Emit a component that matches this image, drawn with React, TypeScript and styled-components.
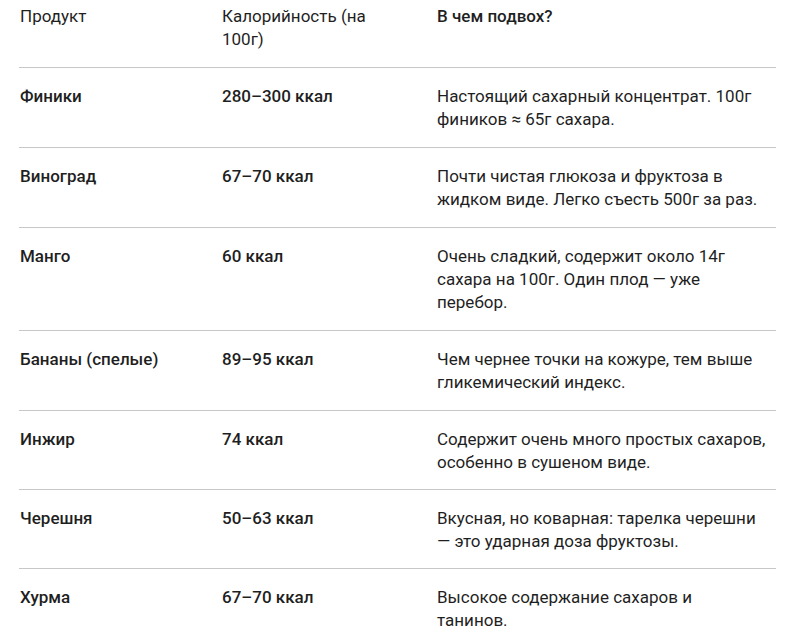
import React from "react";
import styled, { createGlobalStyle } from "styled-components";

interface FruitRow {
  name: string;
  kcal: string;
  catchText: string;
}

const rows: FruitRow[] = [
  {
    name: "Финики",
    kcal: "280–300 ккал",
    catchText: "Настоящий сахарный концентрат. 100г фиников ≈ 65г сахара.",
  },
  {
    name: "Виноград",
    kcal: "67–70 ккал",
    catchText:
      "Почти чистая глюкоза и фруктоза в жидком виде. Легко съесть 500г за раз.",
  },
  {
    name: "Манго",
    kcal: "60 ккал",
    catchText:
      "Очень сладкий, содержит около 14г сахара на 100г. Один плод — уже перебор.",
  },
  {
    name: "Бананы (спелые)",
    kcal: "89–95 ккал",
    catchText: "Чем чернее точки на кожуре, тем выше гликемический индекс.",
  },
  {
    name: "Инжир",
    kcal: "74 ккал",
    catchText: "Содержит очень много простых сахаров, особенно в сушеном виде.",
  },
  {
    name: "Черешня",
    kcal: "50–63 ккал",
    catchText: "Вкусная, но коварная: тарелка черешни — это ударная доза фруктозы.",
  },
  {
    name: "Хурма",
    kcal: "67–70 ккал",
    catchText: "Высокое содержание сахаров и\nтанинов.",
  },
];

const App: React.FC = () => {
  return (
    <>
      <GlobalStyle />
      <Table>
        <HeadRow>
          <Cell>Продукт</Cell>
          <Cell>Калорийность (на 100г)</Cell>
          <Cell $bold>В чем подвох?</Cell>
        </HeadRow>
        {rows.map((row) => (
          <BodyRow key={row.name}>
            <Cell $bold>{row.name}</Cell>
            <Cell $bold>{row.kcal}</Cell>
            <Cell>{row.catchText}</Cell>
          </BodyRow>
        ))}
      </Table>
    </>
  );
};

export default App;

const GlobalStyle = createGlobalStyle`
  body {
    margin: 0;
    background: #ffffff;
    font-family: Roboto, "Noto Sans", sans-serif;
    color: #1f1f1f;
  }
`;

const Table = styled.div`
  width: 757px;
  margin-left: 19px;
  display: flex;
  flex-direction: column;
`;

const RowBase = styled.div`
  display: grid;
  grid-template-columns: 202px 215px 1fr;
  border-bottom: 1px solid #c7c7c7;
  &:last-child {
    border-bottom: none;
  }
  & > div:nth-child(2) {
    padding-right: 40px;
  }
  & > div:nth-child(3) {
    padding-right: 6px;
  }
`;

const HeadRow = styled(RowBase)`
  padding: 5px 0 16px;
`;

const BodyRow = styled(RowBase)`
  padding: 17px 0 16px;
  &:nth-child(n + 6) {
    padding-bottom: 15px;
  }
`;

const Cell = styled.div<{ $bold?: boolean }>`
  padding-left: 1px;
  padding-right: 16px;
  font-size: 17px;
  line-height: 23px;
  white-space: pre-line;
  font-weight: ${({ $bold }) => ($bold ? 500 : 400)};
`;
